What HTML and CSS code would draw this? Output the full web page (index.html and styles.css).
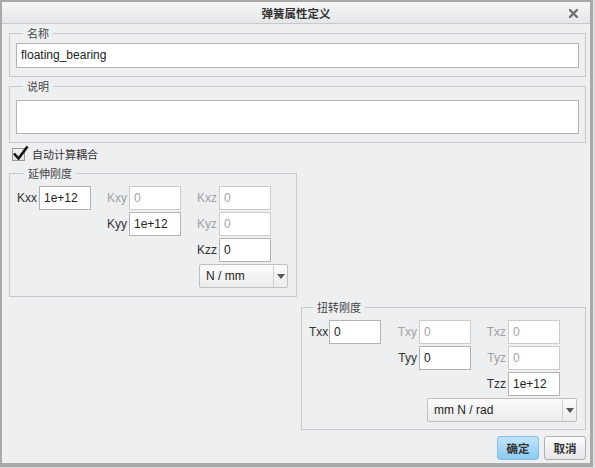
FILE: index.html
```html
<!DOCTYPE html>
<html lang="zh">
<head>
<meta charset="utf-8">
<title>弹簧属性定义</title>
<link rel="stylesheet" href="styles.css">
</head>
<body>
<div class="window">
  <div class="titlebar">
    <span class="title">弹簧属性定义</span>
    <svg class="close" width="9" height="9" viewBox="0 0 9 9"><path d="M1 1 L8 8 M8 1 L1 8" stroke="#707173" stroke-width="2.3" stroke-linecap="square"/></svg>
  </div>
  <div class="content">
    <fieldset class="group name-group">
      <legend>名称</legend>
      <div class="field wide">floating_bearing</div>
    </fieldset>
    <fieldset class="group desc-group">
      <legend>说明</legend>
      <div class="field area"></div>
    </fieldset>
    <div class="check">
      <span class="box"><svg class="tick" width="18" height="18" viewBox="0 0 18 18"><path d="M2 8.5 L6.5 13.5 L15.5 1.5" fill="none" stroke="#111" stroke-width="2.6"/></svg></span>
      <span class="check-label">自动计算耦合</span>
    </div>
    <fieldset class="group matrix stiff">
      <legend>延伸刚度</legend>
      <div class="grid">
        <span class="lbl c1 r1">Kxx</span><div class="field c2 r1">1e+12</div>
        <span class="lbl dis c3 r1">Kxy</span><div class="field dis c4 r1">0</div>
        <span class="lbl dis c5 r1">Kxz</span><div class="field dis c6 r1">0</div>
        <span class="lbl c3 r2">Kyy</span><div class="field c4 r2">1e+12</div>
        <span class="lbl dis c5 r2">Kyz</span><div class="field dis c6 r2">0</div>
        <span class="lbl c5 r3">Kzz</span><div class="field c6 r3">0</div>
        <div class="select stiff-select r4"><span class="sel-text">N / mm</span><span class="sel-arrow"><svg width="8" height="5" viewBox="0 0 8 5"><path d="M0 0 L8 0 L4 5 Z" fill="#555"/></svg></span></div>
      </div>
    </fieldset>
    <fieldset class="group matrix tors">
      <legend>扭转刚度</legend>
      <div class="grid">
        <span class="lbl c1 r1">Txx</span><div class="field c2 r1">0</div>
        <span class="lbl dis c3 r1">Txy</span><div class="field dis c4 r1">0</div>
        <span class="lbl dis c5 r1">Txz</span><div class="field dis c6 r1">0</div>
        <span class="lbl c3 r2">Tyy</span><div class="field c4 r2">0</div>
        <span class="lbl dis c5 r2">Tyz</span><div class="field dis c6 r2">0</div>
        <span class="lbl c5 r3">Tzz</span><div class="field c6 r3">1e+12</div>
        <div class="select tors-select r4"><span class="sel-text">mm N / rad</span><span class="sel-arrow"><svg width="8" height="5" viewBox="0 0 8 5"><path d="M0 0 L8 0 L4 5 Z" fill="#555"/></svg></span></div>
      </div>
    </fieldset>
    <div class="buttons">
      <button class="btn primary">确定</button>
      <button class="btn">取消</button>
    </div>
  </div>
</div>
</body>
</html>
```

FILE: styles.css
```css
* { box-sizing: border-box; }

html, body {
  margin: 0;
  padding: 0;
  background: #dcdddf;
}

body {
  font-family: "Liberation Sans", "Noto Sans CJK SC", sans-serif;
  font-size: 12px;
  color: #2b2b2b;
}

.window {
  width: 593px;
  height: 467px;
  background: #eeeff1;
  border-style: solid;
  border-color: #a8a9ab;
  border-width: 2px 3px 4px 2px;
  display: flex;
  flex-direction: column;
}

.titlebar {
  height: 22px;
  flex: none;
  display: flex;
  align-items: center;
  justify-content: center;
  background: linear-gradient(#f5f6f7, #e4e6e9);
  border-bottom: 1px solid #c6c8cb;
  position: relative;
}

.title {
  font-family: "Noto Sans CJK SC", sans-serif;
  font-size: 11.5px;
  font-weight: bold;
  color: #333;
  line-height: 16px;
}

.close {
  position: absolute;
  right: 12px;
  top: 7px;
}

.content {
  flex: 1;
  display: flex;
  flex-direction: column;
  padding: 1px 4px 0 7px;
}

.group {
  margin: 0;
  border: 1px solid #c8c9cc;
  min-width: 0;
}

.group legend {
  font-family: "Noto Sans CJK SC", sans-serif;
  font-size: 11px;
  line-height: 16px;
  color: #444;
  padding: 0 4px;
  margin-left: 7px;
}

.name-group {
  padding: 2px 6px 8px 6px;
}

.desc-group {
  margin-top: 1px;
  padding: 6px 6px 8px 6px;
}

.field {
  height: 24px;
  background: #fff;
  border: 1px solid #b2b3b5;
  padding: 0 4px;
  line-height: 22px;
  color: #222;
  white-space: nowrap;
}

.field.wide {
  height: 25px;
  line-height: 23px;
}

.field.area {
  height: 34px;
}

.field.dis {
  border-color: #cbccce;
  color: #a3a4a6;
}

.check {
  height: 22px;
  display: flex;
  align-items: center;
  padding-left: 3px;
}

.box {
  width: 13px;
  height: 13px;
  border: 1px solid #9a9b9d;
  background: linear-gradient(#f2f2f2, #e2e2e2);
  position: relative;
}

.tick {
  position: absolute;
  left: -1px;
  top: -4px;
}

.check-label {
  font-family: "Noto Sans CJK SC", sans-serif;
  font-size: 11px;
  margin-left: 7px;
  color: #333;
}

.matrix .grid {
  display: grid;
  grid-template-rows: repeat(4, 24px);
  row-gap: 2px;
}

.stiff {
  width: 288px;
  padding: 5px 0 8px 7px;
}

.stiff .grid {
  grid-template-columns: 22px 52px 38px 52px 38px 52px 17px;
}

.tors {
  width: 285px;
  align-self: flex-end;
  margin-top: 2px;
  padding: 5px 0 7px 7px;
}

.tors legend {
  margin-left: 4px;
}

.tors .grid {
  grid-template-columns: 20px 52px 38px 52px 37px 52px 17px;
}

.lbl {
  text-align: right;
  padding-right: 2px;
  line-height: 24px;
  color: #333;
  white-space: nowrap;
}

.lbl.dis { color: #a0a1a3; }

.c1 { grid-column: 1; }
.c2 { grid-column: 2; }
.c3 { grid-column: 3; }
.c4 { grid-column: 4; }
.c5 { grid-column: 5; }
.c6 { grid-column: 6; }
.r1 { grid-row: 1; }
.r2 { grid-row: 2; }
.r3 { grid-row: 3; }
.r4 { grid-row: 4; }

.select {
  display: flex;
  align-items: stretch;
  height: 24px;
  border: 1px solid #bfc0c2;
  background: linear-gradient(#fbfbfb, #ececec);
  border-radius: 2px;
}

.stiff-select {
  grid-column: 5 / 8;
  margin-left: 18px;
}

.tors-select {
  grid-column: 4 / 8;
  margin-left: 8px;
}

.sel-text {
  flex: 1;
  padding-left: 6px;
  line-height: 22px;
  color: #222;
}

.sel-arrow {
  width: 14px;
  border-left: 1px solid #d0d1d3;
  display: flex;
  align-items: center;
  justify-content: center;
}

.buttons {
  display: flex;
  justify-content: flex-end;
  gap: 5px;
  margin-top: 6px;
}

.btn {
  width: 42px;
  height: 24px;
  padding: 0;
  font-family: "Noto Sans CJK SC", sans-serif;
  font-size: 11.5px;
  font-weight: bold;
  color: #333;
  border: 1px solid #aeafb1;
  border-radius: 3px;
  background: linear-gradient(#fbfbfb, #e5e6e8);
}

.btn.primary {
  border-color: #86bde6;
  background: linear-gradient(#bfe3fa, #8dcaf2);
}
```
